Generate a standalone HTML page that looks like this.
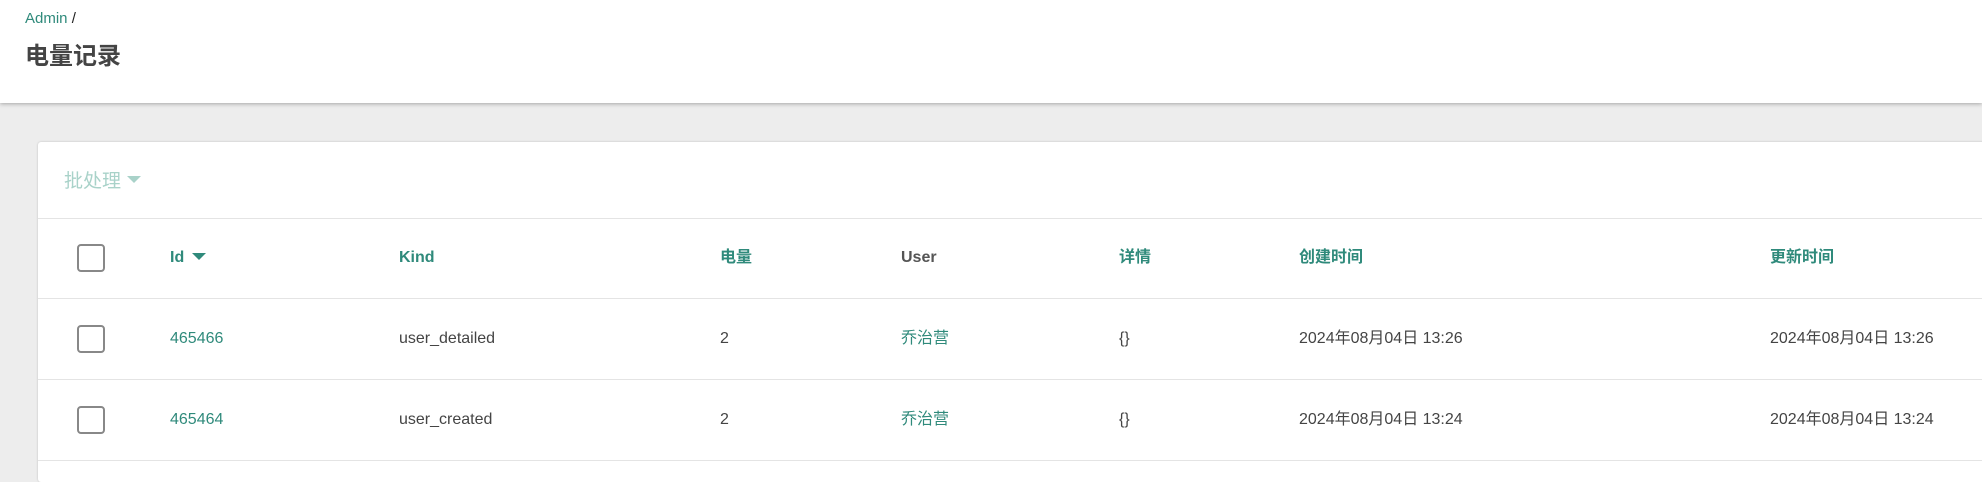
<!DOCTYPE html>
<html><head><meta charset="utf-8"><style>
*{margin:0;padding:0;box-sizing:border-box}
body{width:1982px;height:472px;overflow:hidden;background:#ededed;font-family:"Liberation Sans","Noto Sans CJK SC",sans-serif;color:#444;position:relative}
.hdr{position:absolute;left:0;top:0;width:1982px;height:103px;background:#fff;box-shadow:0 1px 4px rgba(0,0,0,.3)}
.bc{position:absolute;left:25px;top:10px;font-size:15px;color:#222}
.bc a{color:#2f8a7b}
.title{position:absolute;left:25px;top:36px;font-size:24px;color:#444;font-weight:bold}
.card{position:absolute;left:38px;top:142px;width:1960px;height:340px;background:#fff;border-radius:3px;box-shadow:0 0 2px rgba(0,0,0,.2)}
.batch{position:absolute;left:26px;top:24px;font-size:19px;color:#a9d2c9}
.tri{display:inline-block;width:0;height:0;border-left:7px solid transparent;border-right:7px solid transparent;border-top:7px solid #a9d2c9;vertical-align:middle;margin-left:6px;position:relative;top:-2px}
.line{position:absolute;left:0;width:100%;height:1px;background:#e4e4e4}
.cell{position:absolute;font-size:16px;line-height:20px;white-space:nowrap}
.h{font-weight:bold;color:#2f8a7b}
.g{color:#2f8a7b}
.cb{position:absolute;left:39px;width:28px;height:28px;border:2px solid #888;border-radius:4px}
.dt{display:inline-block;width:0;height:0;border-left:7px solid transparent;border-right:7px solid transparent;border-top:7px solid #2f8a7b;margin-left:8px;vertical-align:middle;position:relative;top:-1px}
</style></head><body>
<div class="hdr">
<div class="bc"><a>Admin</a> /</div>
<div class="title">电量记录</div>
</div>
<div class="card">
<div class="batch">批处理<span class="tri"></span></div>
<div class="line" style="top:76px"></div>
<div class="line" style="top:156px"></div>
<div class="line" style="top:237px"></div>
<div class="line" style="top:318px"></div>

<div class="cb" style="top:102px"></div>
<div class="cell h" style="left:132px;top:106px">Id<span class="dt"></span></div>
<div class="cell h" style="left:361px;top:106px">Kind</div>
<div class="cell h" style="left:682px;top:106px">电量</div>
<div class="cell" style="left:863px;top:106px;font-weight:bold;color:#555">User</div>
<div class="cell h" style="left:1081px;top:106px">详情</div>
<div class="cell h" style="left:1261px;top:106px">创建时间</div>
<div class="cell h" style="left:1732px;top:106px">更新时间</div>

<div class="cb" style="top:183px"></div>
<div class="cell g" style="left:132px;top:187px">465466</div>
<div class="cell" style="left:361px;top:187px">user_detailed</div>
<div class="cell" style="left:682px;top:187px">2</div>
<div class="cell g" style="left:863px;top:187px">乔治营</div>
<div class="cell" style="left:1081px;top:187px">{}</div>
<div class="cell" style="left:1261px;top:187px">2024年08月04日 13:26</div>
<div class="cell" style="left:1732px;top:187px">2024年08月04日 13:26</div>

<div class="cb" style="top:264px"></div>
<div class="cell g" style="left:132px;top:268px">465464</div>
<div class="cell" style="left:361px;top:268px">user_created</div>
<div class="cell" style="left:682px;top:268px">2</div>
<div class="cell g" style="left:863px;top:268px">乔治营</div>
<div class="cell" style="left:1081px;top:268px">{}</div>
<div class="cell" style="left:1261px;top:268px">2024年08月04日 13:24</div>
<div class="cell" style="left:1732px;top:268px">2024年08月04日 13:24</div>
</div>
</body></html>
